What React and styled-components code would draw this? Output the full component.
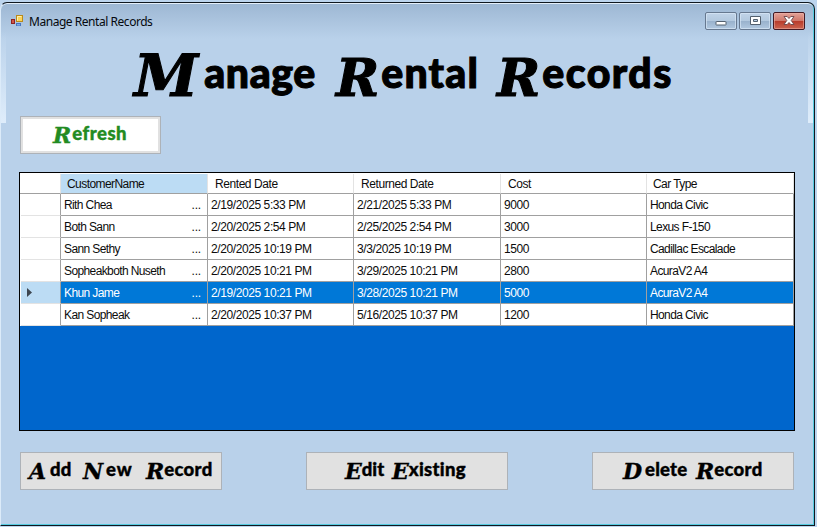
import React from "react";
import styled, { createGlobalStyle } from "styled-components";

const GlobalStyle = createGlobalStyle`
  *, *::before, *::after { box-sizing: border-box; }
  body { margin: 0; background: #b9d1ea; overflow: hidden; }
`;

const Desktop = styled.div`
  width: 817px;
  height: 527px;
  padding: 2px 2px 1px 0;
  background: #bdd5ee;
`;

const Window = styled.main`
  position: relative;
  width: 815px;
  height: 524px;
  border: 1px solid #10181f;
  border-left-color: #dcebf9;
  border-radius: 7px 7px 0 0;
  background: linear-gradient(#9db7d3, #b9d1ea 36px);
  box-shadow: inset -1px -1px 0 #55cbe0, inset 0 1px 0 #e4effa;
`;

const EdgeGlow = styled.i`
  position: absolute;
  top: 28px;
  ${(p) => p.$side}: ${(p) => (p.$side === "left" ? 0 : 1)}px;
  width: 5px;
  height: 92px;
  background: linear-gradient(#e6f1fc00, #dfedfb);
`;

const TitleBar = styled.header`
  display: flex;
  height: 35px;
  padding: 9px 9px 0 9px;
  font: 12px "Noto Sans", "Open Sans", sans-serif;
  color: #05090e;
`;

const Caption = styled.span`
  flex: 1;
  margin-left: 5px;
  font-size: 12px;
  line-height: 19px;
  letter-spacing: -0.46px;
`;

const Controls = styled.div`
  display: flex;
  gap: 2px;
`;

const ControlButton = styled.button`
  display: grid;
  place-items: center;
  width: 32px;
  height: 18px;
  padding: 0;
  border: 1px solid ${(p) => (p.$danger ? "#431923" : "#66788f")};
  border-radius: 2px;
  background: ${(p) =>
    p.$danger
      ? "linear-gradient(#e3a298, #d0786b 48%, #b83a2a 50%, #cb6450)"
      : "linear-gradient(#c0d3e8, #b3c9df 48%, #98b1cc 50%, #b1c8e0)"};
  box-shadow: inset 0 0 0 1px ${(p) => (p.$danger ? "#f0b7ad80" : "#dceaf8a0")};
`;

const Body = styled.section`
  padding: 0 19px 0 18px;
`;

const Heading = styled.h1`
  display: flex;
  height: 78px;
  margin: 0;
  padding-left: 115px;
  font: 900 41px/70px Lato, sans-serif;
  color: #000;
  -webkit-text-stroke: 1.1px #000;
`;

const HeadingWord = styled.span`
  display: block;
  flex: none;
  width: ${(p) => p.$width}px;
  white-space: nowrap;
  letter-spacing: ${(p) => p.$spacing}px;
  &::first-letter {
    font: italic bold ${(p) => p.$cap}px/1 "DejaVu Serif", serif;
    letter-spacing: 0;
    vertical-align: -8px;
    margin-right: ${(p) => p.$gap}px;
  }
`;

const ScriptButton = styled.button`
  display: flex;
  justify-content: center;
  width: ${(p) => (p.$refresh ? 141 : 202)}px;
  height: 38px;
  padding: 0 0 4px;
  border: 1px solid #adb2b8;
  background: ${(p) => (p.$refresh ? "#fff" : "#e1e1e1")};
  box-shadow: ${(p) => (p.$refresh ? "inset 0 0 0 2px #e1e1e1" : "none")};
  color: ${(p) => (p.$refresh ? "#228b22" : "#000")};
  font: 900 18.5px/32px Lato, sans-serif;
  font-variant-ligatures: none;
  -webkit-text-stroke: 0.4px currentColor;
`;

const ScriptWord = styled.span`
  display: block;
  flex: none;
  width: ${(p) => p.$width}px;
  text-align: left;
  white-space: nowrap;
  letter-spacing: ${(p) => p.$spacing || 0}px;
  &::first-letter {
    font: italic bold 22px/1 "DejaVu Serif", serif;
    letter-spacing: 0;
    vertical-align: -3px;
    margin-right: ${(p) => p.$gap || 0}px;
  }
`;

const GridFrame = styled.div`
  width: 776px;
  height: 259px;
  margin: 18px 0 21px;
  border: 1px solid #000;
  background: #0066cc;
`;

const Records = styled.div`
  padding-top: 1px;
  background: #fff;
  width: 774px;
  font: 12px "Liberation Sans", Arial, sans-serif;
  color: #0c0c0c;
`;

const Row = styled.div`
  display: grid;
  grid-template-columns: 41px 147px 146px 147px 146px 147px;
  grid-template-rows: 100%;
  height: ${(p) => (p.$head ? 20 : 22)}px;
  color: ${(p) => (p.$selected ? "#fff" : "#0c0c0c")};
`;

const HeadCell = styled.div`
  padding-left: 6px;
  border-right: 1px solid #e3e3e3;
  border-bottom: 1px solid #a0a0a0;
  background: ${(p) => (p.$active ? "#bcdcf4" : "#fff")};
  line-height: 20px;
  letter-spacing: -0.57px;
  &:nth-child(3), &:nth-child(4), &:nth-child(5) { padding-left: 7px; letter-spacing: -0.43px; }
`;

const Marker = styled.div`
  display: flex;
  align-items: center;
  margin-left: 1px;
  padding-left: 6px;
  border-right: 1px solid #a0a0a0;
  border-bottom: 1px solid #e3e3e3;
  background: ${(p) => (p.$selected ? "#bcdcf4" : "#fff")};
`;

const Cell = styled.div`
  display: flex;
  justify-content: space-between;
  padding: 0 6px 0 3px;
  border-right: 1px solid #a0a0a0;
  border-bottom: 1px solid #a0a0a0;
  background: ${(p) => (p.$selected ? "#0078d7" : "#fff")};
  line-height: 22px;
  letter-spacing: ${(p) => (p.$dense ? -0.61 : -0.41)}px;
  white-space: nowrap;
`;

const Overflow = styled.span`
  letter-spacing: -0.2px;
`;

const Actions = styled.div`
  display: flex;
  gap: 84px;
  margin-left: 1px;
`;

const RefreshRow = styled.div`
  margin-left: 1px;
`;

const columns = ["CustomerName", "Rented Date", "Returned Date", "Cost", "Car Type"];
const records = [
  ["Rith Chea", "2/19/2025 5:33 PM", "2/21/2025 5:33 PM", "9000", "Honda Civic"],
  ["Both Sann", "2/20/2025 2:54 PM", "2/25/2025 2:54 PM", "3000", "Lexus F-150"],
  ["Sann Sethy", "2/20/2025 10:19 PM", "3/3/2025 10:19 PM", "1500", "Cadillac Escalade"],
  ["Sopheakboth Nuseth", "2/20/2025 10:21 PM", "3/29/2025 10:21 PM", "2800", "AcuraV2 A4"],
  ["Khun Jame", "2/19/2025 10:21 PM", "3/28/2025 10:21 PM", "5000", "AcuraV2 A4"],
  ["Kan Sopheak", "2/20/2025 10:37 PM", "5/16/2025 10:37 PM", "1200", "Honda Civic"],
];
const selectedIndex = 4;

function AppIcon() {
  return (
    <svg width="14" height="14" viewBox="0 0 14 14">
      <rect x="6.5" y="3.5" width="6" height="6" fill="#fbd45b" stroke="#b98a1c" />
      <path d="M7.5 8.5V4.5H11.5" fill="none" stroke="#fff0ae" />
      <rect x="1.5" y="7.5" width="3" height="4" fill="#cf5548" stroke="#8f2323" />
      <rect x="6.5" y="11.5" width="4" height="2.5" fill="#78a9ee" stroke="#4a76bd" />
    </svg>
  );
}

function ControlIcon({ kind }) {
  return (
    <svg width="14" height="12" viewBox="0 0 14 12">
      {kind === "min" && <rect x="2" y="6.5" width="10" height="3.5" rx=".5" fill="#fff" stroke="#53606e" />}
      {kind === "max" && (
        <path d="M2.5 1.5H12.5V9.5H2.5Z M5.5 4.5V6.5H9.5V4.5Z" fill="#fff" fillRule="evenodd" stroke="#53606e" />
      )}
      {kind === "close" && (
        <path
          d="M2 1.5H5.2L7 3.5L8.8 1.5H12L9.2 5.5L12 9.5H8.8L7 7.5L5.2 9.5H2L4.8 5.5Z"
          fill="#fff"
          stroke="#6a4549"
          strokeWidth=".9"
        />
      )}
    </svg>
  );
}

export default function App() {
  return (
    <Desktop>
      <GlobalStyle />
      <Window>
        <EdgeGlow $side="left" />
        <EdgeGlow $side="right" />
        <TitleBar>
          <AppIcon />
          <Caption>Manage Rental Records</Caption>
          <Controls>
            <ControlButton aria-label="Minimize"><ControlIcon kind="min" /></ControlButton>
            <ControlButton aria-label="Maximize"><ControlIcon kind="max" /></ControlButton>
            <ControlButton aria-label="Close" $danger><ControlIcon kind="close" /></ControlButton>
          </Controls>
        </TitleBar>
        <Body>
          <Heading>
            <HeadingWord $width={202} $spacing={0.6} $cap={58} $gap={6}>Manage</HeadingWord>
            <HeadingWord $width={161} $spacing={1.2} $cap={52} $gap={2}>Rental</HeadingWord>
            <HeadingWord $width={180} $spacing={1.5} $cap={52} $gap={2}>Records</HeadingWord>
          </Heading>
          <RefreshRow>
            <ScriptButton $refresh>
              <ScriptWord $width={75} $gap={1} $spacing={0.5}>Refresh</ScriptWord>
            </ScriptButton>
          </RefreshRow>
          <GridFrame>
            <Records>
              <Row $head>
                <HeadCell />
                {columns.map((name, i) => (
                  <HeadCell key={name} $active={i === 0}>{name}</HeadCell>
                ))}
              </Row>
              {records.map((record, i) => (
                <Row key={i} $selected={i === selectedIndex}>
                  <Marker $selected={i === selectedIndex}>
                    {i === selectedIndex && (
                      <svg width="6" height="9" viewBox="0 0 6 9"><path d="M0 0L5 4.5L0 9Z" fill="#3d4650" /></svg>
                    )}
                  </Marker>
                  {record.map((value, c) => (
                    <Cell key={c} $selected={i === selectedIndex} $dense={c === 0 || c === 4}>
                      <span>{value}</span>
                      {c === 0 && <Overflow>...</Overflow>}
                    </Cell>
                  ))}
                </Row>
              ))}
            </Records>
          </GridFrame>
          <Actions>
            <ScriptButton>
              <ScriptWord $width={54} $gap={4}>Add</ScriptWord>
              <ScriptWord $width={63} $gap={3} $spacing={0.8}>New</ScriptWord>
              <ScriptWord $width={67} $gap={0} $spacing={0.3}>Record</ScriptWord>
            </ScriptButton>
            <ScriptButton>
              <ScriptWord $width={47}>Edit</ScriptWord>
              <ScriptWord $width={77} $spacing={0.3}>Existing</ScriptWord>
            </ScriptButton>
            <ScriptButton>
              <ScriptWord $width={73} $gap={3} $spacing={0.2}>Delete</ScriptWord>
              <ScriptWord $width={67} $gap={0} $spacing={0.3}>Record</ScriptWord>
            </ScriptButton>
          </Actions>
        </Body>
      </Window>
    </Desktop>
  );
}
